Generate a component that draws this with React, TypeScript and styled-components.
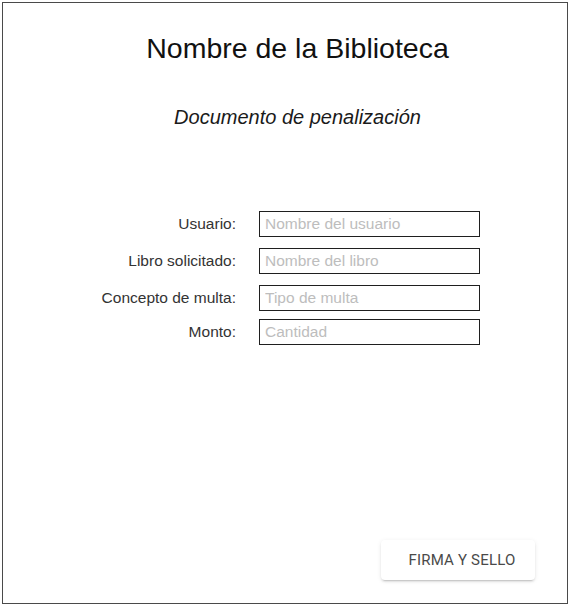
import React from "react";
import styled, { createGlobalStyle } from "styled-components";

const Global = createGlobalStyle`
  html, body { margin: 0; padding: 0; background: #ffffff; }
  body { padding: 2px; font-family: "Liberation Sans", Arial, sans-serif; }
  * { box-sizing: border-box; }
`;

const Sheet = styled.div`
  width: 566px;
  height: 602px;
  border: 1px solid #4a4a4a;
  display: flex;
  flex-direction: column;
  background: #fff;
`;

const Header = styled.header`
  display: flex;
  flex-direction: column;
  align-items: center;
  padding: 29px 0 0 25px;
`;

const Title = styled.h1`
  margin: 0;
  font-size: 28.5px;
  font-weight: 400;
  color: #111;
  line-height: normal;
`;

const Subtitle = styled.h2`
  margin: 41px 0 0;
  font-size: 20px;
  font-weight: 400;
  font-style: italic;
  color: #1a1a1a;
  line-height: normal;
`;

const Form = styled.form`
  display: flex;
  flex-direction: column;
  margin-top: 82px;
`;

const Row = styled.div<{ $gap: number }>`
  display: grid;
  grid-template-columns: 233px 221px;
  column-gap: 23px;
  align-items: center;
  margin-top: ${(p) => p.$gap}px;
`;

const Label = styled.label`
  text-align: right;
  font-size: 15.5px;
  color: #333;
`;

const Field = styled.input`
  width: 221px;
  height: 26px;
  border: 1px solid #1f1f1f;
  padding: 0 5px;
  font-family: "Liberation Sans", Arial, sans-serif;
  font-size: 15.5px;
  color: #333;
  outline: none;
  &::placeholder { color: #bdbdbd; }
`;

const Footer = styled.footer`
  margin-top: auto;
  display: flex;
  justify-content: flex-end;
  padding: 0 32px 23px 0;
`;

const Button = styled.button`
  width: 154px;
  height: 40px;
  border: none;
  border-radius: 4px;
  padding: 0 0 0 8px;
  background: #fff;
  font-family: Roboto, "Liberation Sans", sans-serif;
  font-size: 15px;
  font-weight: 400;
  letter-spacing: 0.2px;
  color: #4a4a4a;
  text-transform: uppercase;
  box-shadow: 0 3px 1px -2px rgba(0,0,0,0.12), 0 2px 2px 0 rgba(0,0,0,0.08), 0 1px 5px 0 rgba(0,0,0,0.08);
  cursor: pointer;
`;

const fields = [
  { label: "Usuario:", placeholder: "Nombre del usuario", gap: 0 },
  { label: "Libro solicitado:", placeholder: "Nombre del libro", gap: 11 },
  { label: "Concepto de multa:", placeholder: "Tipo de multa", gap: 11 },
  { label: "Monto:", placeholder: "Cantidad", gap: 8 },
];

export default function App() {
  return (
    <>
      <Global />
      <Sheet>
        <Header>
          <Title>Nombre de la Biblioteca</Title>
          <Subtitle>Documento de penalización</Subtitle>
        </Header>
        <Form onSubmit={(e) => e.preventDefault()}>
          {fields.map((f) => (
            <Row key={f.label} $gap={f.gap}>
              <Label>{f.label}</Label>
              <Field placeholder={f.placeholder} />
            </Row>
          ))}
        </Form>
        <Footer>
          <Button type="button">Firma y sello</Button>
        </Footer>
      </Sheet>
    </>
  );
}
